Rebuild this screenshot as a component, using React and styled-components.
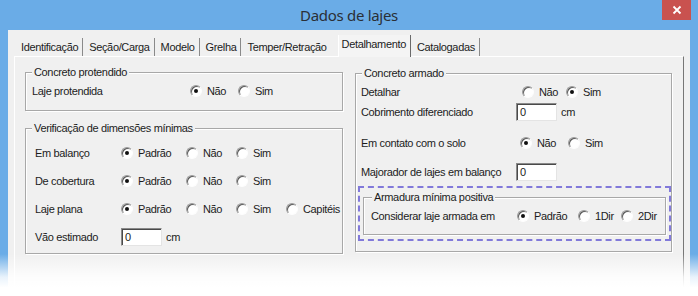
import React from "react";
import styled, { createGlobalStyle } from "styled-components";

const Global = createGlobalStyle`
  body {
    margin: 0;
    background: #fff;
    font-family: "Liberation Sans", Arial, sans-serif;
  }
`;

export default function App() {
  return (
    <>
      <Global />
      <Frame>
        <TitleBar>
          <Title>Dados de lajes</Title>
          <Close>
            <svg width="10" height="10" viewBox="0 0 10 10">
              <path d="M1.5 1.5 L8.5 8.5 M8.5 1.5 L1.5 8.5" stroke="#fff" strokeWidth="1.8" />
            </svg>
          </Close>
        </TitleBar>
        <Client>
          <TabBar>
            <Tab>Identificação</Tab>
            <Tab>Seção/Carga</Tab>
            <Tab>Modelo</Tab>
            <Tab>Grelha</Tab>
            <Tab $last>Temper/Retração</Tab>
            <ActiveTab>Detalhamento</ActiveTab>
            <Tab>Catalogadas</Tab>
          </TabBar>
          <Panel>
            <Column>
              <Group $pad="8px 0 9px 6px">
                <Legend>Concreto protendido</Legend>
                <Row>
                  <Label $w={158}>Laje protendida</Label>
                  <Option $w={48} checked>Não</Option>
                  <Option>Sim</Option>
                </Row>
              </Group>
              <Group $pad="14px 0 6px 9px" $mt={17}>
                <Legend>Verificação de dimensões mínimas</Legend>
                <Row>
                  <Label $w={86}>Em balanço</Label>
                  <Option $w={65} checked>Padrão</Option>
                  <Option $w={50}>Não</Option>
                  <Option>Sim</Option>
                </Row>
                <Row $mt={8}>
                  <Label $w={86}>De cobertura</Label>
                  <Option $w={65} checked>Padrão</Option>
                  <Option $w={50}>Não</Option>
                  <Option>Sim</Option>
                </Row>
                <Row $mt={8}>
                  <Label $w={86}>Laje plana</Label>
                  <Option $w={65} checked>Padrão</Option>
                  <Option $w={50}>Não</Option>
                  <Option $w={50}>Sim</Option>
                  <Option>Capitéis</Option>
                </Row>
                <Row $mt={8}>
                  <Label $w={86}>Vão estimado</Label>
                  <Field>0</Field>
                  <Unit>cm</Unit>
                </Row>
              </Group>
            </Column>
            <Column $mt={1}>
              <Group $pad="8px 0 10px 0">
                <Legend>Concreto armado</Legend>
                <Row $pl={5}>
                  <Label $w={161}>Detalhar</Label>
                  <Option $w={44}>Não</Option>
                  <Option checked>Sim</Option>
                </Row>
                <Row $pl={5}>
                  <Label $w={155}>Cobrimento diferenciado</Label>
                  <Field>0</Field>
                  <Unit>cm</Unit>
                </Row>
                <Row $pl={5} $mt={11}>
                  <Label $w={159}>Em contato com o solo</Label>
                  <Option $w={48} checked>Não</Option>
                  <Option>Sim</Option>
                </Row>
                <Row $pl={5} $mt={9}>
                  <Label $w={155}>Majorador de lajes em balanço</Label>
                  <Field>0</Field>
                </Row>
                <Highlight>
                  <Group $pad="8px 0 8px 7px">
                    <Legend $left={8}>Armadura mínima positiva</Legend>
                    <Row>
                      <Label $w={146}>Considerar laje armada em</Label>
                      <Option $w={61} checked>Padrão</Option>
                      <Option $w={43}>1Dir</Option>
                      <Option>2Dir</Option>
                    </Row>
                  </Group>
                </Highlight>
              </Group>
            </Column>
          </Panel>
        </Client>
        <Fade />
      </Frame>
    </>
  );
}

function Option({ checked, $w, children }) {
  return (
    <OptionWrap $w={$w}>
      <Radio $on={checked} />
      {children}
    </OptionWrap>
  );
}

const Frame = styled.div`
  position: relative;
  width: 698px;
  height: 296px;
  overflow: hidden;
  background: #6aace7;
  display: flex;
  flex-direction: column;
  font-size: 11px;
  letter-spacing: -0.35px;
  color: #1c1c1c;
`;

const TitleBar = styled.div`
  height: 30px;
  display: grid;
  grid-template-columns: 1fr auto 1fr;
  align-items: start;
`;

const Title = styled.div`
  grid-column: 2;
  line-height: 30px;
  font-family: "Noto Sans", "Open Sans", sans-serif;
  font-size: 15px;
  letter-spacing: -0.3px;
  color: #2a2f36;
`;

const Close = styled.div`
  grid-column: 3;
  justify-self: end;
  margin-right: 7px;
  width: 29px;
  height: 20px;
  background: #c9524f;
  display: flex;
  align-items: center;
  justify-content: center;
`;

const Client = styled.div`
  flex: 1;
  margin: 0 8px;
  background: #f0f0f0;
  padding-top: 7px;
  display: flex;
  flex-direction: column;
`;

const TabBar = styled.div`
  display: flex;
  height: 19px;
  margin-left: 7px;
  position: relative;
  z-index: 1;
`;

const Tab = styled.div`
  padding: 0 4px 0 6px;
  line-height: 18px;
  margin-top: 1px;
  border-right: ${(p) => (p.$last ? "none" : "1px solid #8a8a8a")};
  white-space: nowrap;
`;

const ActiveTab = styled.div`
  margin: -2px 0 -1px 7px;
  padding: 0 4px 0 3px;
  line-height: 19px;
  height: 22px;
  background: #f4f4f4;
  border-left: 1px solid #fff;
  border-right: 1px solid #6a6a6a;
  white-space: nowrap;
`;

const Panel = styled.div`
  flex: 1;
  margin-left: 6px;
  width: 670px;
  box-sizing: border-box;
  border-top: 1px solid #fff;
  border-left: 1px solid #fff;
  border-right: 1px solid #767676;
  padding: 15px 11px 0 10px;
  display: grid;
  grid-template-columns: 318px 317px;
  column-gap: 12px;
  align-content: start;
`;

const Column = styled.div`
  display: flex;
  flex-direction: column;
  margin-top: ${(p) => p.$mt || 0}px;
`;

const Group = styled.div`
  position: relative;
  margin-top: ${(p) => p.$mt || 0}px;
  padding: ${(p) => p.$pad};
  border: 1px solid #a8a8a8;
  box-shadow: inset 1px 1px 0 #fff, 1px 1px 0 #fff;
`;

const Legend = styled.span`
  position: absolute;
  top: -7px;
  left: ${(p) => p.$left || 6}px;
  padding: 0 2px;
  line-height: 13px;
  background: #f0f0f0;
  white-space: nowrap;
`;

const Highlight = styled.div`
  margin: 4px 0 0 2px;
  padding: 9px 3px 4px 3px;
  border: 2px dashed #8179da;
`;

const Row = styled.div`
  display: flex;
  align-items: center;
  height: 20px;
  margin-top: ${(p) => p.$mt || 0}px;
  padding-left: ${(p) => p.$pl || 0}px;
  white-space: nowrap;
`;

const Label = styled.span`
  flex: none;
  width: ${(p) => p.$w}px;
`;

const OptionWrap = styled.span`
  flex: none;
  display: flex;
  align-items: center;
  gap: 5px;
  width: ${(p) => (p.$w ? `${p.$w}px` : "auto")};
`;

const Radio = styled.span`
  position: relative;
  flex: none;
  width: 12px;
  height: 12px;
  box-sizing: border-box;
  border-radius: 50%;
  background: #fff;
  border: 1px solid;
  border-color: #9a9a9a #fdfdfd #fdfdfd #9a9a9a;
  box-shadow: inset 1px 1px 0 #5a5a5a;

  &::after {
    content: "";
    display: ${(p) => (p.$on ? "block" : "none")};
    position: absolute;
    left: 3px;
    top: 3px;
    width: 4px;
    height: 4px;
    border-radius: 50%;
    background: #111;
  }
`;

const Field = styled.span`
  flex: none;
  width: 41px;
  height: 18px;
  box-sizing: border-box;
  background: #fff;
  border-top: 1px solid #8a8a8a;
  border-left: 1px solid #8a8a8a;
  border-right: 1px solid #e4e4e4;
  border-bottom: 1px solid #e4e4e4;
  box-shadow: inset 1px 1px 0 #4a4a4a;
  padding: 2px 0 0 3px;
  line-height: 13px;
`;

const Unit = styled.span`
  margin-left: 4px;
`;

const Fade = styled.div`
  position: absolute;
  left: 0;
  right: 0;
  bottom: 0;
  height: 42px;
  pointer-events: none;
  background: linear-gradient(to bottom, rgba(255, 255, 255, 0) 0%, rgba(255, 255, 255, 0.85) 55%, #fff 80%);
`;
